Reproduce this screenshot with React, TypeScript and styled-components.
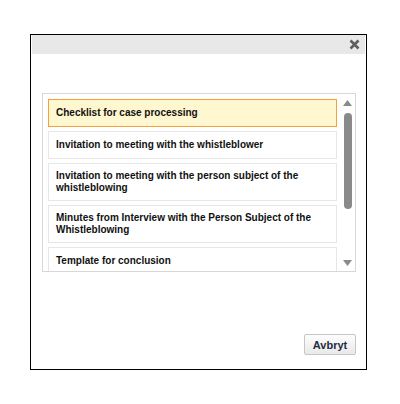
import React from 'react';
import styled, {createGlobalStyle} from 'styled-components';

const GlobalStyle = createGlobalStyle`
  html, body {
    margin: 0;
    padding: 0;
    background: #fff;
    font-family: "Liberation Sans", Arial, sans-serif;
  }
`;

const Page = styled.div`
  padding: 34px 0 0 30px;
`;

const Dialog = styled.div`
  width: 337px;
  height: 336px;
  box-sizing: border-box;
  border: 1px solid #000;
  padding: 0 1px 1px 1px;
  display: flex;
  flex-direction: column;
  background: #fff;
`;

const TitleBar = styled.div`
  height: 19px;
  background: #e8e8e8;
  display: flex;
  justify-content: flex-end;
  align-items: center;
  padding-right: 5px;
`;

const CloseButton = styled.button`
  border: 0;
  padding: 0;
  background: transparent;
  width: 11px;
  height: 11px;
  display: flex;
  cursor: pointer;
`;

const Body = styled.div`
  flex: 1;
  display: flex;
  flex-direction: column;
  padding: 39px 9px 13px 10px;
`;

const ListBox = styled.div`
  height: 179px;
  box-sizing: border-box;
  border: 1px solid #d8d8d8;
  display: flex;
  padding: 5px 0 0 5px;
  overflow: hidden;
`;

const Items = styled.div`
  flex: 1;
  display: flex;
  flex-direction: column;
  gap: 4px;
  margin-right: 3px;
`;

const Item = styled.div<{$active?: boolean}>`
  flex-shrink: 0;
  display: flex;
  align-items: center;
  border: 1px solid ${p => (p.$active ? '#f5a03c' : '#e6e6e6')};
  background: ${p => (p.$active ? '#fff7cf' : '#fff')};
  padding: 6px 7px;
  min-height: 14px;
  font-size: 10px;
  line-height: 12px;
  font-weight: bold;
  color: #111;
`;

const Scroll = styled.div`
  width: 15px;
  display: flex;
  flex-direction: column;
  align-items: center;
  padding: 1px 0 5px;
  gap: 7px;
`;

const Thumb = styled.div`
  width: 8px;
  height: 96px;
  border-radius: 4px;
  background: #8a8a8a;
`;

const Spacer = styled.div`
  flex: 1;
`;

const Footer = styled.div`
  display: flex;
  justify-content: flex-end;
`;

const Button = styled.button`
  width: 52px;
  height: 21px;
  box-sizing: border-box;
  border: 1px solid #c6c6c6;
  border-radius: 2px;
  background: linear-gradient(#fdfdfd, #e9e9e9);
  font-family: "Liberation Sans", Arial, sans-serif;
  font-size: 11px;
  font-weight: bold;
  color: #1f2b40;
  padding: 0;
  cursor: pointer;
`;

const Arrow = ({up}: {up?: boolean}) => (
    <svg width="9" height="6" viewBox="0 0 9 6">
        <path d={up ? 'M4.5 0 L9 6 L0 6 Z' : 'M0 0 L9 0 L4.5 6 Z'} fill="#8a8a8a"/>
    </svg>
);

const templates = [
    'Checklist for case processing',
    'Invitation to meeting with the whistleblower',
    'Invitation to meeting with the person subject of the whistleblowing',
    'Minutes from Interview with the Person Subject of the Whistleblowing',
    'Template for conclusion',
];

const App = () => (
    <Page>
        <GlobalStyle/>
        <Dialog>
            <TitleBar>
                <CloseButton aria-label="Close">
                    <svg width="11" height="11" viewBox="0 0 11 11">
                        <path d="M1.5 1.5 L9.5 9.5 M9.5 1.5 L1.5 9.5" stroke="#5e5e5e" strokeWidth="2.6"/>
                    </svg>
                </CloseButton>
            </TitleBar>
            <Body>
                <ListBox>
                    <Items>
                        {templates.map((t, i) => (
                            <Item key={t} $active={i === 0}>{t}</Item>
                        ))}
                    </Items>
                    <Scroll>
                        <Arrow up/>
                        <Thumb/>
                        <Spacer/>
                        <Arrow/>
                    </Scroll>
                </ListBox>
                <Spacer/>
                <Footer>
                    <Button>Avbryt</Button>
                </Footer>
            </Body>
        </Dialog>
    </Page>
);

export default App;
